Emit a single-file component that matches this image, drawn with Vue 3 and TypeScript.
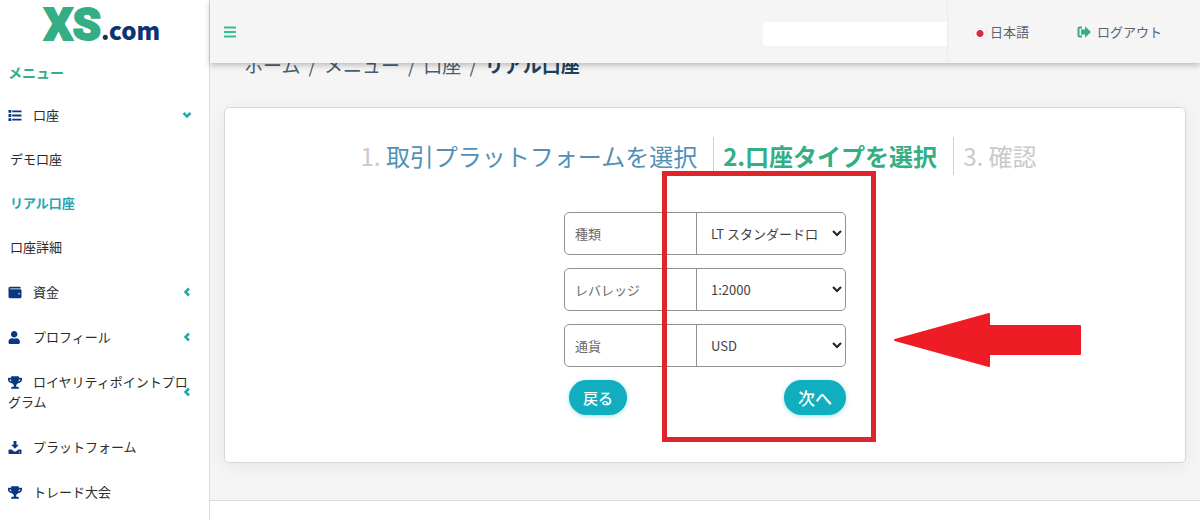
<script setup lang="ts">
import { ref } from 'vue'

type IconName = 'list' | 'wallet' | 'user' | 'trophy' | 'download'

interface MenuItem {
  label: string
  icon: IconName
  arrow?: 'down' | 'left'
  children?: { label: string; active?: boolean }[]
}

interface Field {
  id: string
  label: string
  options: string[]
}

const icons: Record<IconName, { box: string; d: string }> = {
  list: {
    box: '0 0 14 14',
    d: 'M0 1h3v3H0zM4 1.500h10v2H4zM0 5.500h3v3H0zM4 6h10v2H4zM0 10h3v3H0zM4 10.500h10v2H4z',
  },
  wallet: {
    box: '0 0 512 512',
    d: 'M461.200 128H80c-8.840 0-16-7.160-16-16s7.160-16 16-16h384c8.840 0 16-7.160 16-16 0-26.510-21.490-48-48-48H64C28.650 32 0 60.650 0 96v320c0 35.350 28.650 64 64 64h397.200c28.020 0 50.800-21.530 50.800-48V176c0-26.470-22.780-48-50.800-48zM416 336c-17.670 0-32-14.330-32-32s14.330-32 32-32 32 14.330 32 32-14.330 32-32 32z',
  },
  user: {
    box: '32 0 512 512',
    d: 'M256 256c70.700 0 128-57.300 128-128S326.700 0 256 0 128 57.300 128 128s57.300 128 128 128zm89.600 32h-16.700c-22.200 10.200-46.900 16-72.900 16s-50.600-5.800-72.900-16h-16.700C92.200 288 32 348.200 32 422.400V464c0 26.500 21.500 48 48 48h352c26.500 0 48-21.500 48-48v-41.600c0-74.200-60.200-134.400-134.400-134.400z',
  },
  trophy: {
    box: '0 0 576 512',
    d: 'M552 64H448V24c0-13.300-10.700-24-24-24H152c-13.300 0-24 10.700-24 24v40H24C10.700 64 0 74.700 0 88v56c0 35.700 22.500 72.400 61.900 100.700 31.500 22.700 69.800 37.100 110 41.700C203.300 338.500 240 360 240 360v72h-48c-35.300 0-64 20.700-64 56v12c0 6.600 5.400 12 12 12h296c6.600 0 12-5.400 12-12v-12c0-35.300-28.700-56-64-56h-48v-72s36.700-21.500 68.100-73.600c40.300-4.600 78.600-19 110-41.700 39.300-28.300 61.900-65 61.900-100.700V88c0-13.300-10.700-24-24-24zM99.300 192.800C74.900 175.200 64 155.600 64 144v-16h64.200c1 32.600 5.800 61.200 12.800 86.200-15.100-5.200-29.200-12.400-41.700-21.400zM512 144c0 16.100-17.700 36.100-35.300 48.800-12.500 9-26.700 16.200-41.800 21.400 7-25 11.800-53.600 12.800-86.200H512v16z',
  },
  download: {
    box: '0 0 512 512',
    d: 'M200 0h112v150h96L256 310 104 150h96zM32 330h90l74 60c34 30 86 30 120 0l74-60h90c18 0 32 14 32 32v118c0 18-14 32-32 32H32c-18 0-32-14-32-32V362c0-18 14-32 32-32zm400 88a24 24 0 1 0 0 48 24 24 0 0 0 0-48z',
  },
}

const menu: MenuItem[] = [
  {
    label: '口座',
    icon: 'list',
    arrow: 'down',
    children: [{ label: 'デモ口座' }, { label: 'リアル口座', active: true }, { label: '口座詳細' }],
  },
  { label: '資金', icon: 'wallet', arrow: 'left' },
  { label: 'プロフィール', icon: 'user', arrow: 'left' },
  { label: 'ロイヤリティポイントプログラム', icon: 'trophy', arrow: 'left' },
  { label: 'プラットフォーム', icon: 'download' },
  { label: 'トレード大会', icon: 'trophy' },
]

const crumbs = ['ホーム', 'メニュー', '口座']

const fields: Field[] = [
  { id: 'type', label: '種類', options: ['LT スタンダード口'] },
  { id: 'leverage', label: 'レバレッジ', options: ['1:2000'] },
  { id: 'currency', label: '通貨', options: ['USD'] },
]

const values = ref<Record<string, string>>({
  type: 'LT スタンダード口',
  leverage: '1:2000',
  currency: 'USD',
})
</script>

<template>
  <div class="page">
    <aside class="sidebar">
      <a class="logo" href="#" aria-label="XS.com">
        <span class="logo-mark">XS</span><span class="logo-domain">.com</span>
      </a>
      <h2 class="menu-title">メニュー</h2>
      <nav>
        <ul class="menu">
          <li v-for="item in menu" :key="item.label">
            <a class="menu-link" href="#">
              <svg class="menu-icon" :viewBox="icons[item.icon].box" aria-hidden="true">
                <path :d="icons[item.icon].d" />
              </svg>{{ item.label }}
              <svg v-if="item.arrow" class="chevron" :class="item.arrow" viewBox="0 0 10 10" aria-hidden="true">
                <path d="M7 1.500 3.500 5 7 8.500" />
              </svg>
            </a>
            <ul v-if="item.children" class="submenu">
              <li v-for="child in item.children" :key="child.label">
                <a class="sub-link" :class="{ active: child.active }" href="#">{{ child.label }}</a>
              </li>
            </ul>
          </li>
        </ul>
      </nav>
    </aside>

    <div class="content">
      <header class="topbar">
        <button class="toggle" type="button" aria-label="メニュー切替">
          <svg viewBox="0 0 12 12" aria-hidden="true"><path d="M0 1.500h12M0 6h12M0 10.500h12" /></svg>
        </button>
        <div class="account"></div>
        <div class="actions">
          <a class="action lang" href="#"><span class="flag"></span>日本語</a>
          <a class="action logout" href="#">
            <svg viewBox="0 0 14 12" aria-hidden="true">
              <path class="door" d="M5 1.500H2.500A1 1 0 0 0 1.500 2.500v7A1 1 0 0 0 2.500 10.500H5" />
              <path class="out" d="M8 .3 14 6l-6 5.700V8.500H4v-5h4z" />
            </svg>
            ログアウト
          </a>
        </div>
      </header>

      <main class="main">
        <nav class="crumbs">
          <template v-for="crumb in crumbs" :key="crumb">
            <a href="#">{{ crumb }}</a><span>/</span>
          </template>
          <strong>リアル口座</strong>
        </nav>

        <section class="card">
          <ol class="steps">
            <li class="step">1. <a href="#">取引プラットフォームを選択</a></li>
            <li class="step current">2.口座タイプを選択</li>
            <li class="step">3. 確認</li>
          </ol>

          <form class="form" @submit.prevent>
            <div v-for="field in fields" :key="field.id" class="field">
              <label :for="field.id">{{ field.label }}</label>
              <div class="select">
                <select :id="field.id" v-model="values[field.id]">
                  <option v-for="option in field.options" :key="option">{{ option }}</option>
                </select>
                <svg viewBox="0 0 10 10" aria-hidden="true"><path d="M1 3l4 4 4-4" /></svg>
              </div>
            </div>
            <div class="buttons">
              <button class="pill back" type="button">戻る</button>
              <button class="pill next" type="submit">次へ</button>
            </div>
            <div class="frame"></div>
            <svg class="pointer" viewBox="0 0 190 56" aria-hidden="true">
              <path d="M3 28 97 2V14H188V42H97V54Z" />
            </svg>
          </form>
        </section>
      </main>
      <footer class="footer"></footer>
    </div>
  </div>
</template>

<style>
body {
  margin: 0;
  background: #fff;
}
</style>

<style scoped>
.page {
  display: grid;
  grid-template-columns: 209px minmax(0, 1fr);
  min-height: 100vh;
  font-family: 'Noto Sans CJK JP', 'Noto Sans', sans-serif;
  font-size: 13px;
  line-height: 20px;
  color: #2b2b2b;
}

.page * {
  box-sizing: border-box;
}

a {
  color: inherit;
  text-decoration: none;
}

ul,
ol {
  list-style: none;
  margin: 0;
  padding: 0;
}

.logo {
  display: flex;
  align-items: baseline;
  height: 46px;
  padding-left: 44px;
  line-height: 50px;
}

.logo-mark {
  font-family: Roboto, sans-serif;
  font-size: 45px;
  font-weight: 900;
  color: #35ad85;
  -webkit-text-stroke: 2px #35ad85;
}

.logo-domain {
  font-size: 24px;
  font-weight: 900;
  color: #0b3472;
}

.menu-title {
  margin: 16px 0 10px;
  padding-left: 8px;
  font-size: 14px;
  line-height: 20px;
  font-weight: 700;
  color: #35ad85;
}

.menu-link {
  position: relative;
  display: block;
  padding: 13px 14px 12px 8px;
}

.menu-icon {
  width: 14px;
  height: 13px;
  margin-right: 11px;
  vertical-align: -2px;
  fill: #0b3680;
}

.chevron {
  position: absolute;
  top: calc(50% - 5px);
  right: 17px;
  width: 10px;
  height: 10px;
  fill: none;
  stroke: #1fa9b1;
  stroke-width: 2.5;
}

.chevron.down {
  transform: rotate(-90deg);
}

.sub-link {
  display: block;
  padding: 12px 10px;
}

.sub-link.active {
  font-weight: 700;
  color: #25a5b3;
}

.content {
  display: flex;
  flex-direction: column;
  border-left: 1px solid #dcdcdc;
}

.topbar {
  position: relative;
  z-index: 1;
  display: flex;
  align-items: center;
  flex: none;
  height: 63px;
  padding-left: 14px;
  background: #f5f5f5;
  box-shadow: 0 2px 6px rgba(0, 0, 0, 0.25);
}

.toggle {
  display: flex;
  padding: 0;
  border: 0;
  background: none;
}

.toggle svg {
  width: 12px;
  height: 12px;
  stroke: #35c08c;
  stroke-width: 2;
}

.account {
  width: 184px;
  height: 24px;
  margin: 4px 0 0 auto;
  border-radius: 3px 0 0 3px;
  background: #fff;
}

.actions {
  display: flex;
  align-items: center;
  gap: 48px;
  align-self: stretch;
  padding: 0 38px 0 26px;
  border-left: 1px solid #ebebeb;
  color: #5d6270;
}

.action {
  display: flex;
  align-items: center;
  gap: 4px;
}

.logout {
  gap: 6px;
}

.flag {
  width: 12px;
  height: 9px;
  margin-top: 3px;
  background: radial-gradient(circle, #d52b3c 3px, #f8f8f8 4px);
  box-shadow: 0 0 1px #bbb;
}

.logout svg {
  width: 14px;
  height: 12px;
}

.door {
  fill: none;
  stroke: #35ad85;
  stroke-width: 2;
}

.out {
  fill: #35ad85;
}

.main {
  flex: none;
  padding: 0 14px 37px;
  background: #f5f5f5;
}

.crumbs {
  display: flex;
  gap: 8px;
  margin: -12px 0 28px;
  padding-left: 20px;
  font-size: 19px;
  line-height: 28px;
  color: #4a5d70;
}

.crumbs strong {
  color: #1f425f;
}

.card {
  padding: 29px 0 47px;
  border: 1px solid #d6d6d6;
  border-radius: 5px;
  background: #fff;
  box-shadow: 0 4px 20px rgba(0, 0, 0, 0.06);
}

.steps {
  display: flex;
  justify-content: center;
  margin-bottom: 37px;
  padding-right: 6px;
  font-size: 24px;
  line-height: 38px;
  color: #c9c9c9;
}

.step {
  padding: 0 16px 0 9px;
}

.step + .step {
  border-left: 1px solid #cfcfcf;
}

.step a {
  color: #5390b5;
}

.step.current {
  font-weight: 700;
  color: #35ad85;
}

.form {
  position: relative;
  width: 282px;
  margin: 0 auto;
}

.field {
  display: flex;
  height: 43px;
  margin-bottom: 13px;
  border: 1px solid #8f8f8f;
  border-radius: 5px;
}

.field label {
  width: 132px;
  padding: 11px 10px;
  border-right: 1px solid #8f8f8f;
  color: #6a6a6a;
}

.select {
  position: relative;
  flex: 1;
}

select {
  width: 100%;
  height: 100%;
  padding: 1px 20px 0 14px;
  border: 0;
  background: transparent;
  font: inherit;
  color: #3f3f3f;
  appearance: none;
}

.select svg {
  position: absolute;
  top: 15px;
  right: 3px;
  width: 10px;
  height: 10px;
  fill: none;
  stroke: #222;
  stroke-width: 2;
  pointer-events: none;
}

.buttons {
  display: flex;
  justify-content: space-between;
  padding-left: 5px;
}

.pill {
  height: 35px;
  padding: 0 14px;
  border: 0;
  border-radius: 18px;
  background: #10aebe;
  box-shadow: 0 1px 4px rgba(16, 174, 190, 0.4);
  font-family: inherit;
  font-weight: 500;
  color: #fff;
}

.back {
  font-size: 15px;
}

.next {
  font-size: 17px;
}

.frame {
  position: absolute;
  top: -41px;
  left: 98px;
  width: 214px;
  height: 271px;
  border: 5px solid #df252c;
  pointer-events: none;
}

.pointer {
  position: absolute;
  top: 100px;
  left: 328px;
  width: 190px;
  height: 56px;
  fill: #ee1c24;
  stroke: #ee1c24;
  stroke-width: 2;
  stroke-linejoin: round;
  pointer-events: none;
}

.footer {
  flex: 1;
  border-top: 1px solid #dcdcdc;
  background: #fff;
}
</style>
